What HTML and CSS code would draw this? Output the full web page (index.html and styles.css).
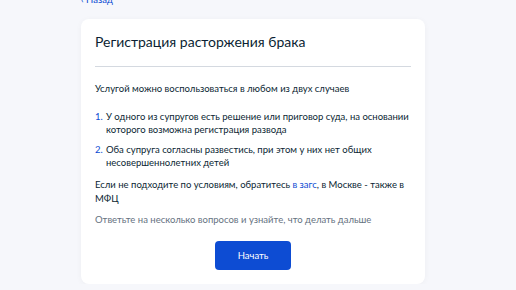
FILE: index.html
```html
<!DOCTYPE html>
<html lang="ru">
<head>
    <meta charset="UTF-8">
    <meta name="viewport" content="width=device-width, initial-scale=1.0">
    <title>Регистрация расторжения брака</title>
    <link rel="stylesheet" href="styles.css">
</head>
<body>
    <div class="page">
        <a class="back" href="#">&lsaquo; Назад</a>

        <div class="card">
            <h1>Регистрация расторжения брака</h1>
            <hr class="divider">

            <p class="intro">Услугой можно воспользоваться в любом из двух случаев</p>

            <ol class="cases">
                <li><span class="num">1.</span><span>У одного из супругов есть решение или приговор суда, на основании которого возможна регистрация развода</span></li>
                <li><span class="num">2.</span><span>Оба супруга согласны развестись, при этом у них нет общих несовершеннолетних детей</span></li>
            </ol>

            <p class="note">Если не подходите по условиям, обратитесь <a href="#">в загс</a>, в Москве - также в МФЦ</p>

            <p class="hint">Ответьте на несколько вопросов и узнайте, что делать дальше</p>

            <div class="actions">
                <button class="btn">Начать</button>
            </div>
        </div>
    </div>
</body>
</html>
```

FILE: styles.css
```css
body {
    margin: 0;
    padding: 0;
    background-color: #f6f7fb;
    font-family: 'Lato', 'Liberation Sans', sans-serif;
    color: #0b1f33;
    overflow: hidden;
}
.page {
    padding-left: 81px;
    width: 344px;
}
.back {
    display: block;
    margin-top: -6px;
    height: 12px;
    line-height: 12px;
    font-size: 9.5px;
    color: #0d4cd3;
    text-decoration: none;
}
.card {
    margin-top: 13px;
    background-color: #fff;
    border-radius: 8px;
    box-shadow: 0 1px 6px rgba(0, 0, 0, 0.04);
    padding: 13px 14px 14px;
}
h1 {
    margin: 0;
    font-size: 14px;
    line-height: 20px;
    font-weight: 400;
}
.divider {
    margin: 14px 0 0;
    border: 0;
    border-top: 1px solid #d4d9e0;
}
.intro {
    margin: 15px 0 0;
    font-size: 9.5px;
    line-height: 14px;
}
.cases {
    list-style: none;
    margin: 14px 0 0;
    padding: 0;
    font-size: 9.5px;
    line-height: 13px;
}
.cases li {
    display: flex;
    margin-bottom: 7px;
}
.cases li:last-child {
    margin-bottom: 9px;
}
.num {
    width: 11px;
    flex-shrink: 0;
    color: #0d4cd3;
}
.note {
    margin: 0;
    font-size: 9.5px;
    line-height: 14px;
}
.note a {
    color: #0d4cd3;
    text-decoration: none;
}
.hint {
    margin: 7px 0 0;
    font-size: 9.5px;
    line-height: 14px;
    color: #66727f;
}
.actions {
    display: flex;
    justify-content: center;
    margin-top: 14px;
}
.btn {
    width: 76px;
    height: 29px;
    border: 0;
    border-radius: 4px;
    background-color: #0d4cd3;
    color: #fff;
    font-family: 'Lato', 'Liberation Sans', sans-serif;
    font-size: 9.5px;
    cursor: pointer;
}
```
